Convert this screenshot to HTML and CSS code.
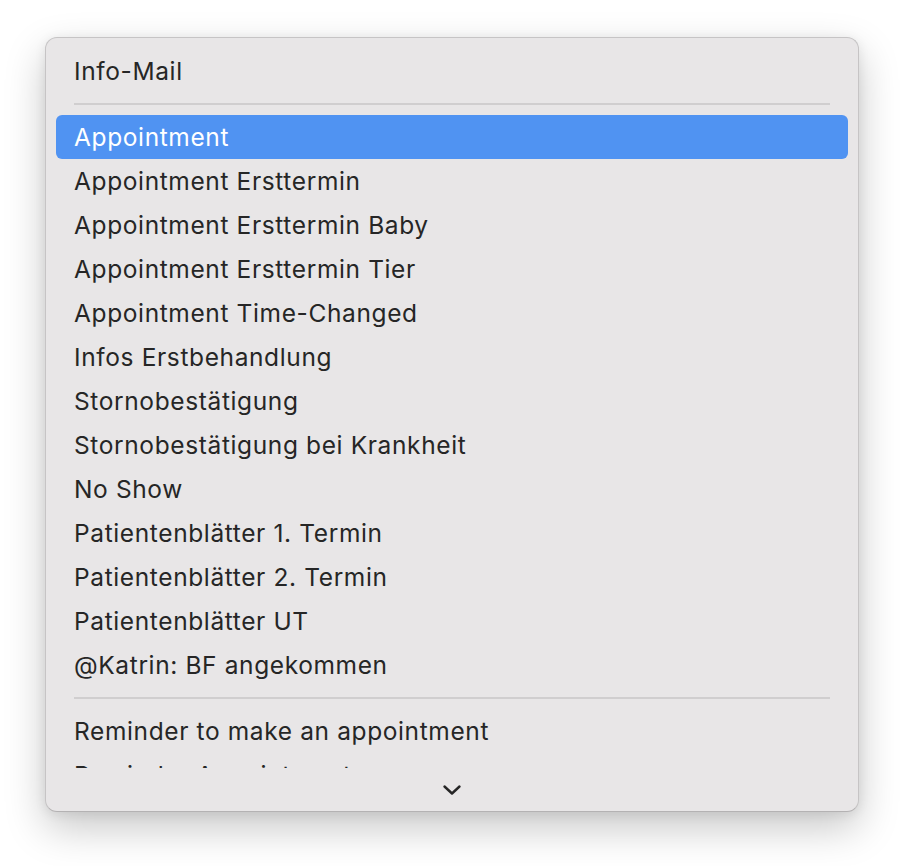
FILE: index.html
```html
<!DOCTYPE html>
<html>
<head>
<meta charset="utf-8">
<link rel="stylesheet" href="styles.css">
</head>
<body>
<div class="menu">
  <div class="viewport">
    <div class="item">Info-Mail</div>
    <div class="sep"></div>
    <div class="item selected">Appointment</div>
    <div class="item">Appointment Ersttermin</div>
    <div class="item">Appointment Ersttermin Baby</div>
    <div class="item">Appointment Ersttermin Tier</div>
    <div class="item">Appointment Time-Changed</div>
    <div class="item">Infos Erstbehandlung</div>
    <div class="item">Stornobestätigung</div>
    <div class="item">Stornobestätigung bei Krankheit</div>
    <div class="item">No Show</div>
    <div class="item">Patientenblätter 1. Termin</div>
    <div class="item">Patientenblätter 2. Termin</div>
    <div class="item">Patientenblätter UT</div>
    <div class="item">@Katrin: BF angekommen</div>
    <div class="sep"></div>
    <div class="item">Reminder to make an appointment</div>
    <div class="item">Reminder Appointment</div>
  </div>
  <div class="scroll">
    <svg width="20" height="12" viewBox="0 0 20 12"><path d="M2.5 2.5 L10 9.5 L17.5 2.5" fill="none" stroke="#262626" stroke-width="2.4" stroke-linecap="round" stroke-linejoin="round"/></svg>
  </div>
</div>
</body>
</html>
```

FILE: styles.css
```css
html, body {
  margin: 0;
  padding: 0;
  background: #ffffff;
}
body {
  min-height: 866px;
  box-sizing: border-box;
  padding: 37px 0 0 45px;
  font-family: "Inter", "Liberation Sans", sans-serif;
}
.menu {
  width: 812px;
  height: 773px;
  background: #e8e6e7;
  border: 1px solid #c6c4c5;
  border-bottom-color: #b4b2b3;
  border-radius: 12px;
  box-shadow: 0 16px 40px rgba(0,0,0,0.22), 0 2px 12px rgba(0,0,0,0.08);
  display: flex;
  flex-direction: column;
  overflow: hidden;
}
.viewport {
  height: 730px;
  padding: 11px 10px 0 10px;
  box-sizing: border-box;
  overflow: hidden;
  flex: none;
}
.item {
  height: 44px;
  line-height: 44px;
  padding-left: 18px;
  font-size: 24.5px;
  letter-spacing: 0.62px;
  color: #262626;
  border-radius: 6px;
  white-space: nowrap;
}
.item.selected {
  background: #5093f2;
  color: #ffffff;
}
.sep {
  height: 22px;
  margin: 0 18px;
  position: relative;
}
.sep::after {
  content: "";
  display: block;
  position: absolute;
  left: 0;
  right: 0;
  top: 10px;
  height: 2px;
  background: #d0cecf;
}
.scroll {
  flex: 1;
  display: flex;
  align-items: center;
  justify-content: center;
}
```
